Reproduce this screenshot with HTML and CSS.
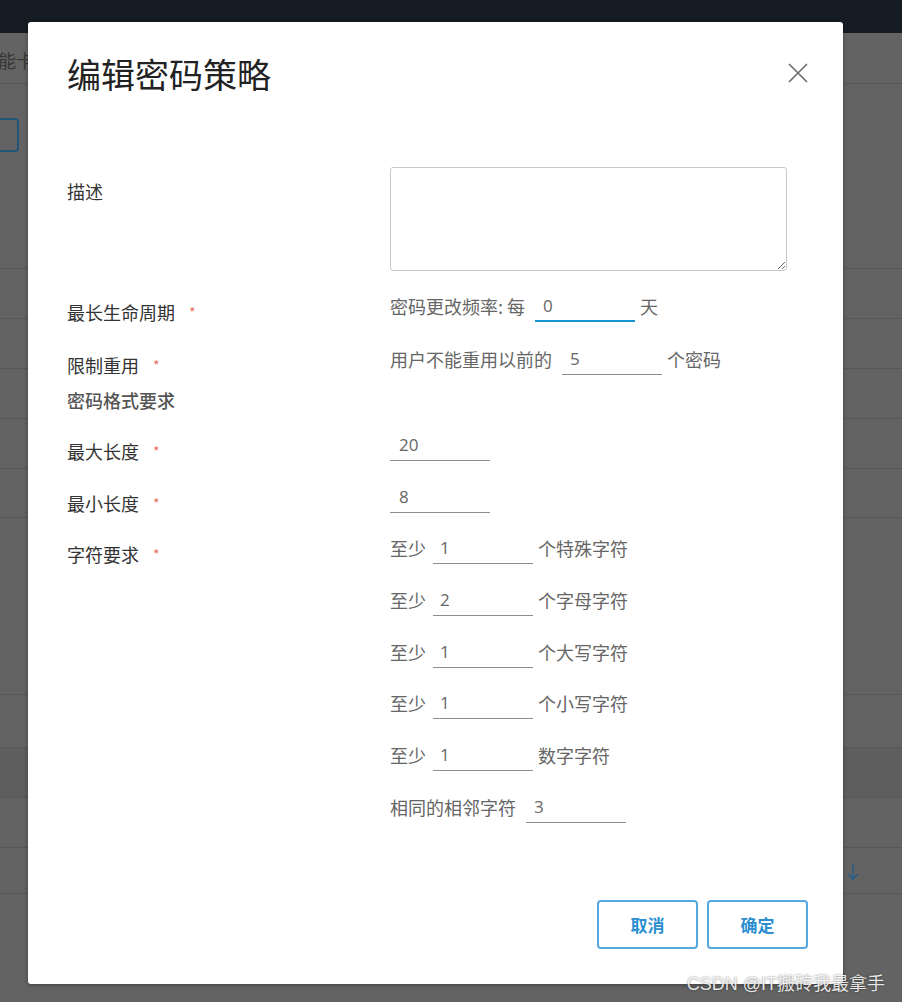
FILE: index.html
```html
<!DOCTYPE html>
<html lang="zh-CN">
<head>
<meta charset="utf-8">
<title>编辑密码策略</title>
<link rel="stylesheet" href="styles.css">
</head>
<body>
<div class="page">
  <div class="topbar"></div>
  <div class="tabs"><span class="tab-text">能卡</span></div>
  <div class="toolbar"><div class="ghost-btn"></div></div>
  <div class="bgrow h50"></div>
  <div class="bgrow h50"></div>
  <div class="bgrow h50"></div>
  <div class="bgrow h50"></div>
  <div class="bgrow h49"></div>
  <div class="bgrow h177"></div>
  <div class="bgrow h53"></div>
  <div class="bgrow h50 band"></div>
  <div class="bgrow h50"></div>
  <div class="bgrow h46">
    <svg class="arrow" width="14" height="18" viewBox="0 0 14 18"><path d="M7 1v15M2 11l5 5 5-5" fill="none" stroke="#2a5e86" stroke-width="1.6"/></svg>
  </div>
  <div class="bgrow rest"></div>
</div>

<div class="modal">
  <div class="modal-header">
    <h2 class="modal-title">编辑密码策略</h2>
    <button class="close" type="button" aria-label="关闭">
      <svg width="20" height="20" viewBox="0 0 20 20"><path d="M1 1L19 19M19 1L1 19" stroke="#6e6e6e" stroke-width="1.7" fill="none"/></svg>
    </button>
  </div>

  <form class="form">
    <div class="row row-desc">
      <span class="label">描述</span>
      <textarea class="desc"></textarea>
    </div>

    <div class="row r-life">
      <span class="label">最长生命周期<span class="req">*</span></span>
      <div class="ctrl"><span>密码更改频率: 每</span><input class="num focus" value="0"><span class="suffix">天</span></div>
    </div>

    <div class="row r-reuse">
      <span class="label">限制重用<span class="req">*</span></span>
      <div class="ctrl"><span>用户不能重用以前的</span><input class="num" value="5"><span class="suffix">个密码</span></div>
    </div>

    <div class="row heading">
      <span class="label label-h">密码格式要求</span>
    </div>

    <div class="row r-max">
      <span class="label">最大长度<span class="req">*</span></span>
      <div class="ctrl"><input class="num first" value="20"></div>
    </div>

    <div class="row r-std">
      <span class="label">最小长度<span class="req">*</span></span>
      <div class="ctrl"><input class="num first" value="8"></div>
    </div>

    <div class="row r-std">
      <span class="label">字符要求<span class="req">*</span></span>
      <div class="stack">
        <div class="ctrl"><span>至少</span><input class="num short" value="1"><span class="suffix">个特殊字符</span></div>
        <div class="ctrl"><span>至少</span><input class="num short" value="2"><span class="suffix">个字母字符</span></div>
        <div class="ctrl"><span>至少</span><input class="num short" value="1"><span class="suffix">个大写字符</span></div>
        <div class="ctrl"><span>至少</span><input class="num short" value="1"><span class="suffix">个小写字符</span></div>
        <div class="ctrl"><span>至少</span><input class="num short" value="1"><span class="suffix">数字字符</span></div>
        <div class="ctrl"><span>相同的相邻字符</span><input class="num" value="3"></div>
      </div>
    </div>
  </form>

  <div class="footer">
    <button class="btn" type="button">取消</button>
    <button class="btn" type="button">确定</button>
  </div>
</div>

<div class="watermark">CSDN @IT搬砖我最拿手</div>
</body>
</html>
```

FILE: styles.css
```css
* { box-sizing: border-box; }

html, body {
  margin: 0;
  padding: 0;
  width: 902px;
  height: 1002px;
  overflow: hidden;
}

body {
  background: #636363;
  font-family: "Open Sans", "Noto Sans CJK SC", sans-serif;
  position: relative;
}

/* ---------- dimmed background page ---------- */
.page {
  width: 902px;
}

.topbar {
  height: 33px;
  background: #161c23;
}

.tabs {
  height: 51px;
  border-bottom: 1px solid #575757;
  font-family: "Noto Sans CJK SC", sans-serif;
  font-size: 18px;
  line-height: 18px;
  color: #363636;
  padding-top: 18px;
}

.tab-text {
  margin-left: -2px;
}

.toolbar {
  height: 184px;
  padding-top: 34px;
}

.ghost-btn {
  margin-left: -60px;
  width: 79px;
  height: 34px;
  border: 2px solid #235676;
  border-radius: 4px;
}

.bgrow {
  border-top: 1px solid #575757;
}

.h50 { height: 50px; }
.h49 { height: 49px; }
.h177 { height: 177px; }
.h53 { height: 53px; }
.h46 { height: 46px; padding: 15px 0 0 846px; }
.rest { height: 120px; }

.band {
  background: #5e5e5e;
}

.arrow {
  display: block;
}

/* ---------- modal ---------- */
.modal {
  position: absolute;
  left: 28px;
  top: 22px;
  width: 815px;
  height: 962px;
  background: #ffffff;
  border-radius: 3px;
  box-shadow: 0 1px 4px rgba(0, 0, 0, 0.35);
  padding: 32px 35px 35px 39px;
  display: flex;
  flex-direction: column;
}

.modal-header {
  display: flex;
  justify-content: space-between;
  align-items: flex-start;
}

.modal-title {
  margin: 0;
  font-family: "Noto Sans CJK SC", sans-serif;
  font-size: 34px;
  line-height: 40px;
  font-weight: 400;
  color: #222;
}

.close {
  margin: 9px 0 0 0;
  padding: 0;
  border: 0;
  background: transparent;
  width: 20px;
  height: 20px;
}

.close svg { display: block; }

/* ---------- form ---------- */
.form {
  margin-top: 73px;
  display: flex;
  flex-direction: column;
}

.row {
  display: flex;
  align-items: flex-start;
}

.label {
  width: 323px;
  height: 32px;
  flex: none;
  font-family: "Noto Sans CJK SC", sans-serif;
  font-size: 18px;
  line-height: 24px;
  padding-top: 10px;
  color: #333;
  white-space: nowrap;
}

.row-desc .label {
  padding-top: 12px;
}

.req {
  color: #e6705d;
  font-size: 14px;
  margin-left: 14px;
  vertical-align: 2px;
}

.desc {
  width: 397px;
  height: 104px;
  margin: 0;
  border: 1px solid #c8c8c8;
  border-radius: 3px;
  padding: 6px 8px;
  font-family: "Noto Sans CJK SC", sans-serif;
  font-size: 16px;
  background: #fff;
}

.r-life { margin-top: 19px; }
.r-reuse { margin-top: 21px; }

.heading {
  margin-top: 17px;
  height: 16px;
}

.label-h {
  height: 16px;
  padding-top: 0;
  line-height: 16px;
  font-weight: 500;
  color: #555;
}

.r-max { margin-top: 21px; }
.r-std { margin-top: 19.7px; }

.ctrl {
  display: flex;
  align-items: center;
  height: 32px;
  font-family: "Noto Sans CJK SC", sans-serif;
  font-size: 18px;
  color: #666;
  white-space: nowrap;
}

.stack {
  display: flex;
  flex-direction: column;
  gap: 19.7px;
}

.num {
  width: 100px;
  height: 32px;
  margin: 0 5px 0 10px;
  padding: 0 8px;
  border: 0;
  border-bottom: 1px solid #8e8e8e;
  border-radius: 0;
  background: transparent;
  font-family: "Open Sans", "Noto Sans CJK SC", sans-serif;
  font-size: 17px;
  color: #666;
  outline: none;
}

.num.first { margin-left: 0; padding-left: 9px; }
.num.short { margin-left: 7px; padding-left: 7px; }

.num.focus {
  border-bottom: 2px solid #1595d3;
}

.suffix {
  color: #666;
}

/* ---------- footer ---------- */
.footer {
  margin-top: auto;
  display: flex;
  justify-content: flex-end;
  gap: 9px;
}

.btn {
  width: 101px;
  height: 49px;
  border: 2px solid #56a9e0;
  border-radius: 4px;
  background: #fff;
  font-family: "Noto Sans CJK SC", sans-serif;
  font-size: 17px;
  font-weight: 700;
  color: #2b8fd1;
  padding: 0;
}

/* ---------- watermark ---------- */
.watermark {
  position: absolute;
  right: 17px;
  bottom: 7px;
  font-family: "Liberation Sans", "Noto Sans CJK SC", sans-serif;
  font-size: 18px;
  line-height: 22px;
  color: rgba(255, 255, 255, 0.88);
  text-shadow: 0 0 2px rgba(0, 0, 0, 0.55);
}
```
